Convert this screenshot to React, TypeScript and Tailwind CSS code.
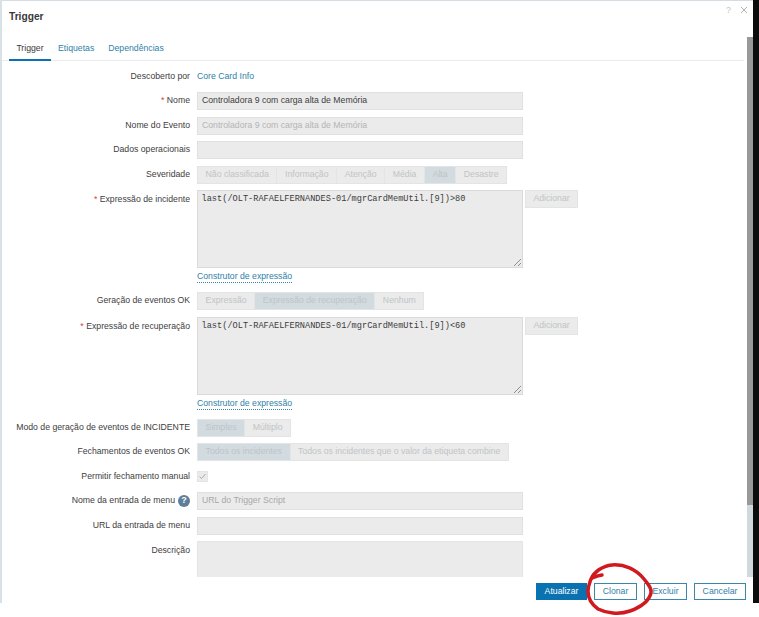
import * as React from "react";

const fieldBox = "h-[18px] w-[326px] border border-[#e0e0e0] bg-[#ebebeb] px-[4px] flex items-center";

function Row({ label, required, hint, align = "center", className = "", children }: {
  label: string;
  required?: boolean;
  hint?: boolean;
  align?: "center" | "start";
  className?: string;
  children: React.ReactNode;
}) {
  return (
    <div className={`flex gap-[7px] ${align === "center" ? "items-center" : "items-start"} ${className}`}>
      <div className={`flex w-[188px] shrink-0 items-center justify-end gap-[3px] text-[8.7px] text-[#404040] ${align === "start" ? "pt-[3px]" : ""}`}>
        <span className="whitespace-nowrap">
          {required && <span className="text-[#d64541]">* </span>}
          {label}
        </span>
        {hint && (
          <span className="flex h-[12px] w-[12px] items-center justify-center rounded-full bg-[#5d7f99] text-[9px] font-bold leading-none text-white">?</span>
        )}
      </div>
      {children}
    </div>
  );
}

function Segments({ items, active }: { items: string[]; active: string }) {
  return (
    <div className="flex h-[18px] border border-[#e4e4e4]">
      {items.map((item, i) => (
        <div
          key={item}
          className={`flex items-center whitespace-nowrap px-[7.6px] text-[8.7px] text-[#c0c4c6] ${item === active ? "bg-[#d2dbe0]" : "bg-[#ebebeb]"} ${i > 0 ? "border-l border-[#e4e4e4]" : ""}`}
        >
          {item}
        </div>
      ))}
    </div>
  );
}

function Expression({ value }: { value: string }) {
  return (
    <div className="relative h-[78px] w-[326px] border border-[#dadada] bg-[#ebebeb] px-[3.5px] pt-[2px] text-[8.65px] font-['Liberation_Mono',monospace] leading-[12px] text-[#3c3c3c]">
      {value}
      <svg className="absolute bottom-0 right-0" width="9" height="9" viewBox="0 0 9 9" fill="none" stroke="#777" strokeWidth="0.8">
        <path d="M1 8 8 1M5 8 8 5" />
      </svg>
    </div>
  );
}

function AddButton() {
  return (
    <div className="flex h-[18px] w-[53px] items-center justify-center border border-[#e4e4e4] bg-[#ebebeb] text-[8.7px] text-[#c0c4c6]">Adicionar</div>
  );
}

function BuilderLink() {
  return (
    <div className="ml-[195px] flex h-[14.5px] items-start">
      <span className="border-b border-dotted border-[#3b86ad] text-[8.7px] leading-[11px] text-[#2f7fa8]">Construtor de expressão</span>
    </div>
  );
}

export default function App() {
  return (
    <div className="relative h-[617px] w-[759px] overflow-hidden bg-white font-['Liberation_Sans',Arial,sans-serif]">
      <div className="flex h-[603px]">
        <div className="w-[2px] bg-[#d8e1e6]" />
        <div className="flex w-[751px] flex-col border-t border-[#d3dde2]">
          <div className="relative h-[36px] shrink-0">
            <h1 className="pl-[7px] pt-[10px] text-[10.2px] font-bold leading-[12px] text-[#383838]">Trigger</h1>
            <span className="absolute right-[22px] top-[3px] text-[9px] text-[#c4c4c4]">?</span>
            <svg className="absolute right-[5px] top-[5px]" width="8" height="8" viewBox="0 0 8 8" fill="none" stroke="#b0b0b0" strokeWidth="1">
              <path d="M1 1 7 7M7 1 1 7" />
            </svg>
          </div>

          <div className="flex min-h-0 flex-1">
            <div className="flex min-w-0 flex-1 flex-col">
              <div className="mr-[3px] flex h-[24px] shrink-0 border-b border-[#ebebeb] pl-[7px] text-[8.7px] leading-[12px]">
                <div className="h-[24px] w-[42px] border-b-[2px] border-[#0a72b0] pt-[5px] text-center text-[#383838]">Trigger</div>
                <div className="ml-[7px] pt-[5px] text-[#2f7fa8]">Etiquetas</div>
                <div className="ml-[14px] pt-[5px] text-[#2f7fa8]">Dependências</div>
              </div>

              <div className="min-h-0 flex-1 overflow-hidden pt-[6.5px]">
                <div className="flex flex-col gap-[6.5px]">
                  <Row label="Descoberto por" className="h-[18px]">
                    <span className="text-[8.7px] text-[#2f7fa8]">Core Card Info</span>
                  </Row>
                  <Row label="Nome" required>
                    <div className={`${fieldBox} text-[8.7px] text-[#404040]`}>Controladora 9 com carga alta de Memória</div>
                  </Row>
                  <Row label="Nome do Evento">
                    <div className={`${fieldBox} text-[8.7px] text-[#b4b4b4]`}>Controladora 9 com carga alta de Memória</div>
                  </Row>
                  <Row label="Dados operacionais">
                    <div className={fieldBox} />
                  </Row>
                  <Row label="Severidade">
                    <Segments items={["Não classificada", "Informação", "Atenção", "Média", "Alta", "Desastre"]} active="Alta" />
                  </Row>
                  <div className="flex flex-col gap-[3px]">
                    <Row label="Expressão de incidente" required align="start">
                      <Expression value="last(/OLT-RAFAELFERNANDES-01/mgrCardMemUtil.[9])>80" />
                      <div className="-ml-[5px]"><AddButton /></div>
                    </Row>
                    <BuilderLink />
                  </div>
                  <Row label="Geração de eventos OK">
                    <Segments items={["Expressão", "Expressão de recuperação", "Nenhum"]} active="Expressão de recuperação" />
                  </Row>
                  <div className="flex flex-col gap-[3px]">
                    <Row label="Expressão de recuperação" required align="start">
                      <Expression value="last(/OLT-RAFAELFERNANDES-01/mgrCardMemUtil.[9])<60" />
                      <div className="-ml-[5px]"><AddButton /></div>
                    </Row>
                    <BuilderLink />
                  </div>
                  <Row label="Modo de geração de eventos de INCIDENTE">
                    <Segments items={["Simples", "Múltiplo"]} active="Simples" />
                  </Row>
                  <Row label="Fechamentos de eventos OK">
                    <Segments items={["Todos os incidentes", "Todos os incidentes que o valor da etiqueta combine"]} active="Todos os incidentes" />
                  </Row>
                  <Row label="Permitir fechamento manual" className="h-[18px]">
                    <div className="flex h-[11px] w-[11px] items-center justify-center border border-[#e4e4e4] bg-[#ebebeb]">
                      <svg width="9" height="9" viewBox="0 0 9 9" fill="none" stroke="#a9a9a9" strokeWidth="1">
                        <path d="M1.5 4.5 3.5 6.5 7.5 2" />
                      </svg>
                    </div>
                  </Row>
                  <Row label="Nome da entrada de menu" hint>
                    <div className={`${fieldBox} text-[8.7px] text-[#a8a8a8]`}>URL do Trigger Script</div>
                  </Row>
                  <Row label="URL da entrada de menu">
                    <div className={fieldBox} />
                  </Row>
                  <Row label="Descrição" align="start">
                    <div className="h-[60px] w-[326px] border border-[#e4e4e4] bg-[#ebebeb]" />
                  </Row>
                </div>
              </div>
            </div>
            <div className="w-[6px] shrink-0 bg-[#d0d9dd]">
              <div className="h-[468px] bg-[#999999]" />
            </div>
          </div>

          <div className="flex h-[26px] shrink-0 items-start justify-end gap-[7px] pr-[7px] pt-[6px] text-[8.7px]">
            <div className="flex h-[17px] w-[51px] items-center justify-center bg-[#0a72b0] text-white">Atualizar</div>
            <div className="flex h-[17px] w-[43px] items-center justify-center border border-[#3b86ad] text-[#2f7fa8]">Clonar</div>
            <div className="flex h-[17px] w-[43px] items-center justify-center border border-[#3b86ad] text-[#2f7fa8]">Excluir</div>
            <div className="flex h-[17px] w-[52px] items-center justify-center border border-[#3b86ad] text-[#2f7fa8]">Cancelar</div>
          </div>
        </div>
        <div className="w-[6px] bg-[#0c0c0c]" />
      </div>

      {/* hand-drawn annotation around Clonar */}
      <svg className="pointer-events-none absolute left-0 top-0" width="759" height="617" fill="none">
        <path
          d="M602 575 C597 576 593 577 591 579 C594 572 602 566 612 565 C624 564 636 569 644 579 C649 585 652 589 651 593 C649 601 641 607 630 611 C619 615 606 613 598 609 C591 604 588 597 588 591 C588 586 590 582 591 579"
          stroke="#d11a1f"
          strokeWidth="3.5"
          strokeLinecap="round"
        />
      </svg>
    </div>
  );
}
